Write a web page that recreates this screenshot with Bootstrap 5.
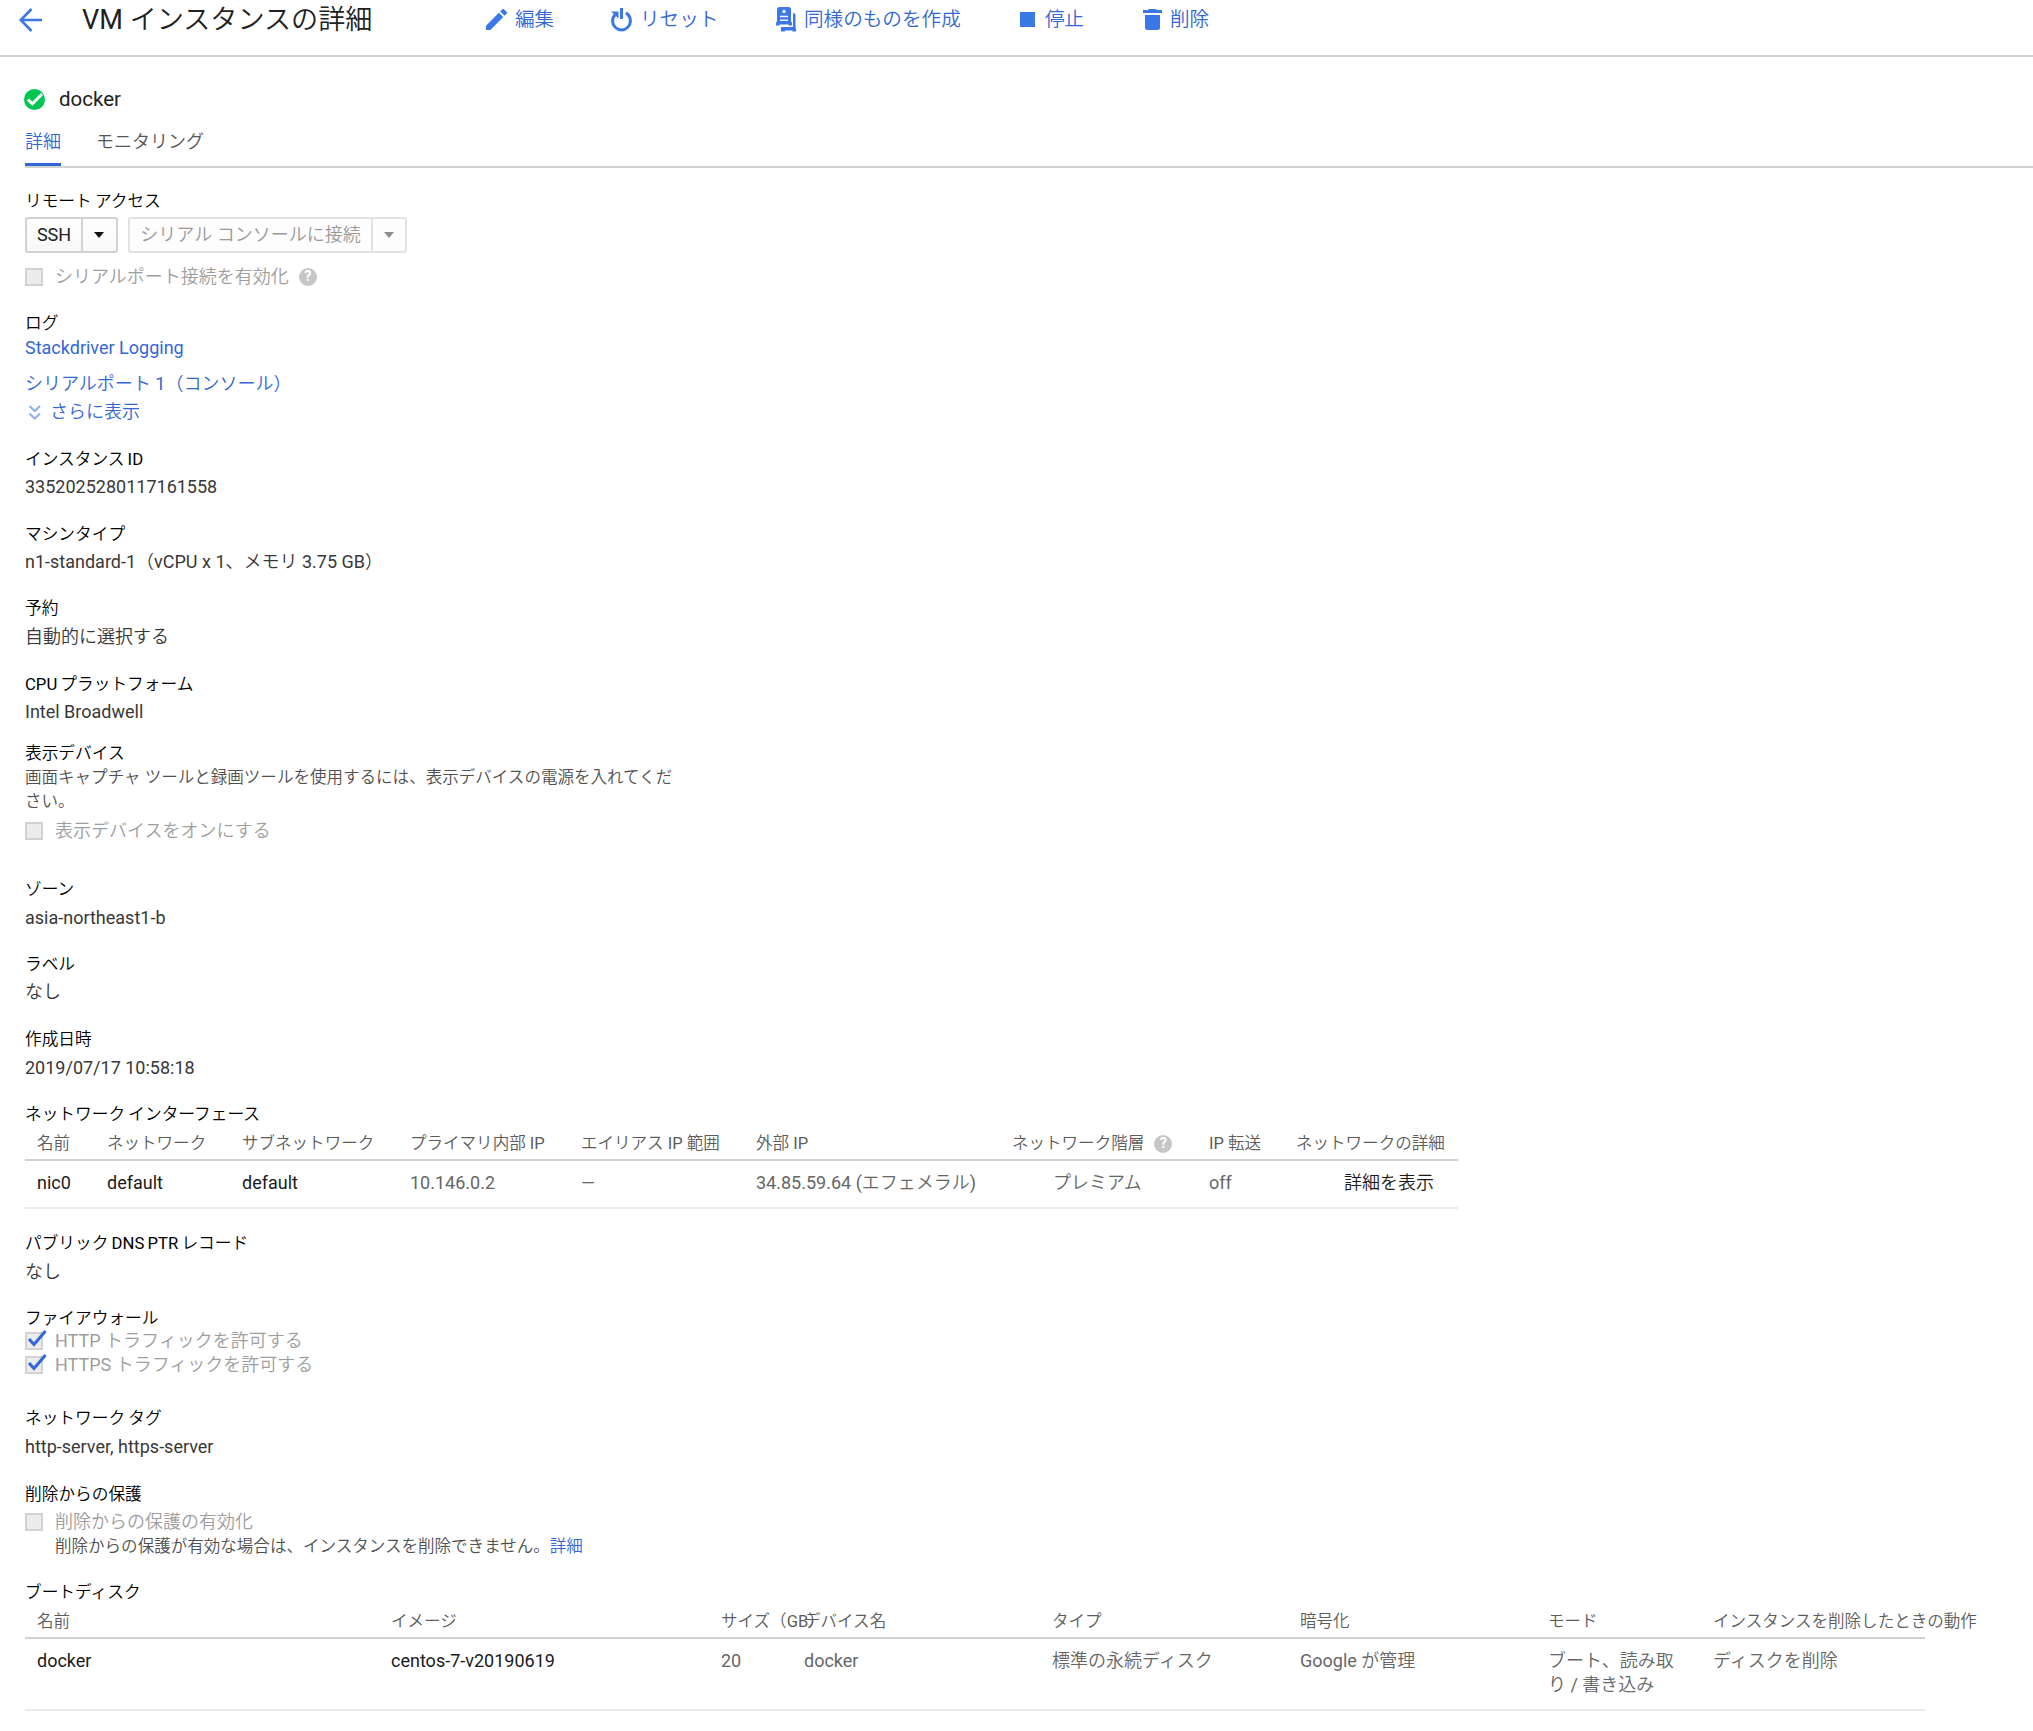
<!DOCTYPE html>
<html lang="ja">
<head>
<meta charset="utf-8">
<title>VM インスタンスの詳細</title>
<link href="https://cdn.jsdelivr.net/npm/bootstrap@5.3.0/dist/css/bootstrap.min.css" rel="stylesheet">
<style>
body{font-family:Roboto,"Noto Sans CJK JP DemiLight","Noto Sans CJK JP Light","Noto Sans CJK JP",sans-serif;font-size:18px;line-height:24px;color:#383838;background:#fff;overflow:hidden;font-weight:400}
a{color:#3367d6;text-decoration:none}
svg{display:block;flex:none}
.topbar{height:57px;border-bottom:2px solid #d2d2d2;padding:0 0 15px 19px}
.topbar svg{margin-top:-1px}
.page-title{font-size:27.1px;font-weight:400;color:#212121;line-height:36px;margin:0 0 0 40px;width:404px}
.tool{font-size:19.6px;gap:8px;white-space:nowrap;line-height:36px}
.t-edit{width:125px}.t-reset{width:165px}.t-clone{width:244px}.t-stop{width:123px;gap:10px}
.body-pad{padding-left:25px}
.inst{margin:30px 0 0 -1px;height:24px;font-size:20.5px;color:#212121;gap:14px}
.tabs{margin-top:18px;border-bottom:2px solid #d2d2d2;height:39px}
.tabs a{display:block;height:37px;padding-top:1px;color:#555;margin-right:35px;white-space:nowrap}
.tabs a.on{color:#3367d6;border-bottom:3px solid #3367d6;}
.ln{height:24px;white-space:nowrap}
.lb{font-size:16.7px;color:#000;line-height:26px;word-spacing:-1px}
.ds{font-size:16.55px;color:#505050}
.ds>span{position:relative;top:1px}
.off{color:#9e9e9e}
.g1{margin-top:1px}.g4{margin-top:4px}.g5{margin-top:5px}.g6{margin-top:6px}.g12{margin-top:12px}.g17{margin-top:17px}.g21{margin-top:21px}.g22{margin-top:22px}.g23{margin-top:23px}.g29{margin-top:29px}.g34{margin-top:34px}
.box{width:18px;height:18px;border:2px solid #d2d2d2;background:#ececec;margin-right:12px;flex:none;position:relative}
.box svg{position:absolute;left:0;top:-4px}
.duo{height:36px;border:2px solid #d2d2d2;border-radius:3px;background:linear-gradient(#fff,#f8f8f8);color:#212121}
.duo>span{display:flex;align-items:center;justify-content:center;white-space:nowrap}
.duo>span+span{border-left:2px solid #d2d2d2;width:35px;padding-right:1px}
.duo .ssh{width:54px}.duo .serial{width:241px}
.duo.dim{border-color:#e3e3e3;color:#999;margin-left:10px;background:#fdfdfd}
.duo.dim>span+span{border-color:#e3e3e3;width:34px;padding-right:0}
.caret{width:0;height:0;border:5.5px solid transparent;border-top:6px solid #111;border-bottom:0}
.dim .caret{border-top-color:#8e8e8e}
.help{width:18px;height:18px;border-radius:50%;background:#c6c6c6;color:#fff;font:700 14.5px/18px Roboto,sans-serif;text-align:center;display:inline-block;margin-left:10px}
.more svg{margin:0 8px 0 3px}
.grid-t{table-layout:fixed;border-collapse:separate;border-spacing:0}
.grid-t th{font-weight:400;font-size:16.55px;color:#5c5c5c;height:35px;padding:2px 0 0;border-bottom:2px solid #d2d2d2;white-space:nowrap;line-height:31px}
.grid-t td{color:#666;height:48px;padding:10px 0 12px;border-bottom:2px solid #ebebeb;white-space:nowrap;vertical-align:top}
.grid-t tr>:first-child{padding-left:12px}
.grid-t td.k{color:#1a1a1a}
.grid-t td.tier{padding-left:41px}
.nics{width:1433px}.disks{width:1900px}
.disks td{height:72px}
</style>
<script src="https://cdn.jsdelivr.net/npm/bootstrap@5.3.0/dist/js/bootstrap.bundle.min.js"></script>
</head>
<body>
<header class="topbar d-flex align-items-center">
<svg width="23" height="24" viewBox="0 0 23 24" fill="none" stroke="#3b78e7" stroke-width="2.600"><path d="M23 12H2M12.500 1 1.800 12l10.700 11"/></svg>
<h1 class="page-title text-nowrap">VM インスタンスの詳細</h1>
<a href="#" class="tool t-edit d-flex align-items-center"><svg width="21" height="21" viewBox="3 3 18 18" fill="#3b78e7"><path d="M3 17.250V21h3.750L17.810 9.940l-3.750-3.750L3 17.250zM20.710 7.040a1 1 0 0 0 0-1.410l-2.340-2.340a1 1 0 0 0-1.410 0l-1.830 1.830 3.750 3.750 1.830-1.830z"/></svg><span>編集</span></a>
<a href="#" class="tool t-reset d-flex align-items-center"><svg width="21" height="24" viewBox="0 0 21 24" fill="none" stroke="#3b78e7" stroke-width="3"><path d="M10.500 0v11"/><path d="M4.500 6.500C2.500 8 1.600 10.500 1.600 13a8.900 8.900 0 0 0 17.800 0c0-3.200-1.500-6-4.400-8.200"/><path d="M0 3.500h7.500v7z" fill="#3b78e7" stroke="none"/></svg><span>リセット</span></a>
<a href="#" class="tool t-clone d-flex align-items-center"><svg width="20" height="25" viewBox="0 0 20 25"><path d="M3.500 0h9Q15 0 15 2.500V14l1 2v2.500h-3.500V17.500h-9v1H0V16l1-2V2.500Q1 0 3.500 0zM17 6q2.500 0 2.500 2.500V20l.5 2v2.500h-3.500V23.500H9v1H5V20h12z" fill="#3b78e7"/><circle cx="8" cy="4.500" r="1.700" fill="#fff"/><path d="M4 9.500h8M4 13.300h8" stroke="#fff" stroke-width="1.600"/></svg><span>同様のものを作成</span></a>
<a href="#" class="tool t-stop d-flex align-items-center"><svg width="15" height="15"><rect width="15" height="15" fill="#3b78e7"/></svg><span>停止</span></a>
<a href="#" class="tool d-flex align-items-center"><svg width="19" height="21" viewBox="0 0 19 21" fill="#3b78e7"><path d="M0 1h5l1-1h7l1 1h5v3H0zM2 6h15v12.500q0 2.500-2.500 2.500h-10Q2 21 2 18.500z"/></svg><span>削除</span></a>
</header>
<main class="body-pad">
<div class="inst d-flex align-items-center"><svg width="21" height="21" viewBox="0 0 21 21"><circle cx="10.500" cy="10.500" r="10.500" fill="#00c752"/><path d="M4 10.500l4.300 4.300L18 5" fill="none" stroke="#fff" stroke-width="3"/></svg><span>docker</span></div>
<nav class="tabs d-flex"><a href="#" class="on">詳細</a><a href="#">モニタリング</a></nav>

<div class="ln lb g21">リモート アクセス</div>
<div class="d-flex g4"><div class="duo d-flex"><span class="ssh">SSH</span><span><i class="caret"></i></span></div><div class="duo dim d-flex"><span class="serial">シリアル コンソールに接続</span><span><i class="caret"></i></span></div></div>
<div class="ln off g12 d-flex align-items-center"><span class="box"></span>シリアルポート接続を有効化<span class="help">?</span></div>
<div class="ln lb g22">ログ</div>
<div class="ln g1"><a href="#">Stackdriver Logging</a></div>
<div class="ln g12"><a href="#">シリアルポート 1（コンソール）</a></div>
<div class="ln g4"><a href="#" class="more d-flex align-items-center"><svg width="14" height="15" viewBox="0 0 14 15" fill="none" stroke="#8fb0f0" stroke-width="2"><path d="M1.500 1l5.200 5L12 1M1.500 8.500l5.200 5 5.300-5"/></svg>さらに表示</a></div>
<div class="ln lb g23">インスタンス ID</div>
<div class="ln g4">3352025280117161558</div>
<div class="ln lb g23">マシンタイプ</div>
<div class="ln g4">n1-standard-1（vCPU x 1、メモリ 3.75 GB）</div>
<div class="ln lb g22">予約</div>
<div class="ln g5">自動的に選択する</div>
<div class="ln lb g23">CPU プラットフォーム</div>
<div class="ln g4">Intel Broadwell</div>
<div class="ln lb g17">表示デバイス</div>
<div class="ds"><span>画面キャプチャ ツールと録画ツールを使用するには、表示デバイスの電源を入れてくだ<br>さい。</span></div>
<div class="ln off g6 d-flex align-items-center"><span class="box"></span>表示デバイスをオンにする</div>
<div class="ln lb g34">ゾーン</div>
<div class="ln g5">asia-northeast1-b</div>
<div class="ln lb g22">ラベル</div>
<div class="ln g4">なし</div>
<div class="ln lb g23">作成日時</div>
<div class="ln g5">2019/07/17 10:58:18</div>

<div class="ln lb g22">ネットワーク インターフェース</div>
<table class="grid-t nics">
<colgroup><col style="width:82px"><col style="width:135px"><col style="width:168px"><col style="width:171px"><col style="width:175px"><col style="width:256px"><col style="width:197px"><col style="width:87px"><col></colgroup>
<thead><tr><th>名前</th><th>ネットワーク</th><th>サブネットワーク</th><th>プライマリ内部 IP</th><th>エイリアス IP 範囲</th><th>外部 IP</th><th><span class="d-flex align-items-center">ネットワーク階層<span class="help">?</span></span></th><th>IP 転送</th><th>ネットワークの詳細</th></tr></thead>
<tbody><tr><td class="k">nic0</td><td class="k">default</td><td class="k">default</td><td>10.146.0.2</td><td>—</td><td>34.85.59.64 (エフェメラル)</td><td class="tier">プレミアム</td><td>off</td><td class="k text-end pe-4">詳細を表示</td></tr></tbody>
</table>

<div class="ln lb g22">パブリック DNS PTR レコード</div>
<div class="ln g5">なし</div>
<div class="ln lb g22" style="height:23px">ファイアウォール</div>
<div class="ln off d-flex align-items-center"><span class="box"><svg width="20" height="18" viewBox="0 0 20 18" fill="none" stroke="#3367d6" stroke-width="3"><path d="M2 9l5 5.500L18.500 1"/></svg></span>HTTP トラフィックを許可する</div>
<div class="ln off d-flex align-items-center"><span class="box"><svg width="20" height="18" viewBox="0 0 20 18" fill="none" stroke="#3367d6" stroke-width="3"><path d="M2 9l5 5.500L18.500 1"/></svg></span>HTTPS トラフィックを許可する</div>
<div class="ln lb g29">ネットワーク タグ</div>
<div class="ln g5">http-server, https-server</div>
<div class="ln lb g23">削除からの保護</div>
<div class="ln off g4 d-flex align-items-center"><span class="box"></span>削除からの保護の有効化</div>
<div class="ln ds" style="padding-left:30px"><span>削除からの保護が有効な場合は、インスタンスを削除できません。<a href="#">詳細</a></span></div>

<div class="ln lb g22">ブートディスク</div>
<table class="grid-t disks">
<colgroup><col style="width:366px"><col style="width:330px"><col style="width:83px"><col style="width:248px"><col style="width:248px"><col style="width:248px"><col style="width:165px"><col></colgroup>
<thead><tr><th>名前</th><th>イメージ</th><th>サイズ（GB）</th><th>デバイス名</th><th>タイプ</th><th>暗号化</th><th>モード</th><th>インスタンスを削除したときの動作</th></tr></thead>
<tbody><tr><td class="k">docker</td><td class="k">centos-7-v20190619</td><td>20</td><td>docker</td><td>標準の永続ディスク</td><td>Google が管理</td><td>ブート、読み取<br>り / 書き込み</td><td>ディスクを削除</td></tr></tbody>
</table>
</main>
</body>
</html>
